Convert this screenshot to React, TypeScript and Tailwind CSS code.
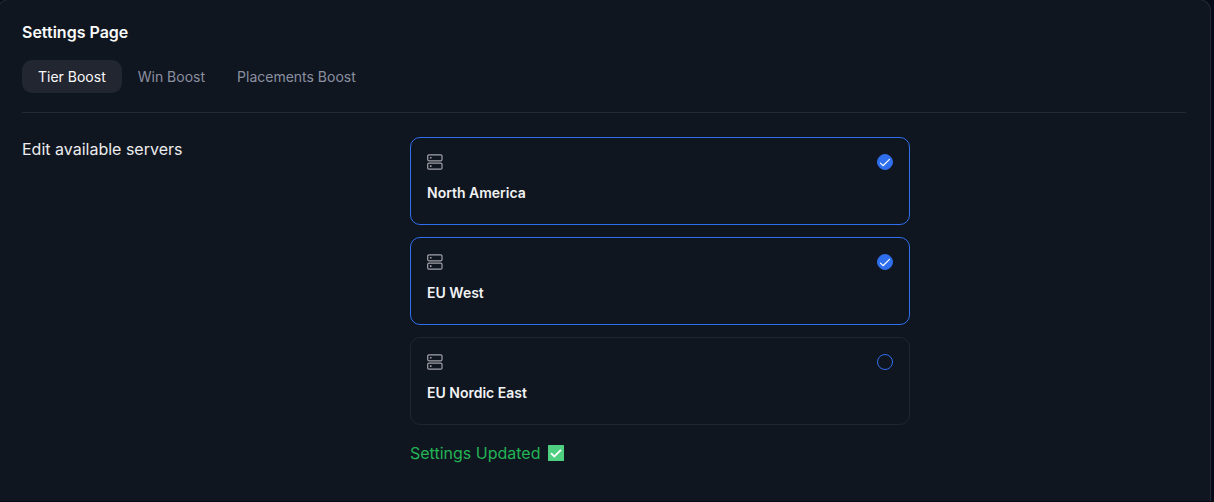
import React, { useState } from 'react';
import clsx from 'clsx';

const tabs = ['Tier Boost', 'Win Boost', 'Placements Boost'];

const servers = [
    { id: 'na', label: 'North America' },
    { id: 'euw', label: 'EU West' },
    { id: 'eune', label: 'EU Nordic East' },
];

const ServerIcon = () => (
    <svg width="16" height="16" viewBox="0 0 16 16" fill="none" stroke="currentColor" strokeWidth="1.2" aria-hidden="true">
        <rect x="0.7" y="0.8" width="14.3" height="6" rx="1.2" />
        <rect x="0.7" y="9.1" width="14.3" height="6" rx="1.2" />
        <path d="M2.9 3.8h1.6M2.9 12.1h1.6" strokeWidth="1.6" />
    </svg>
);

interface ServerCardProps {
    label: string;
    checked: boolean;
    onToggle: () => void;
}

const ServerCard: React.FC<ServerCardProps> = ({ label, checked, onToggle }) => (
    <label
        className={clsx(
            'flex h-22 cursor-pointer justify-between rounded-[10px] border p-4 text-[#a1a1aa]',
            checked ? 'border-[#2f6fed]' : 'border-[#21252f]',
        )}
    >
        <span className="flex flex-col gap-3">
            <ServerIcon />
            <span className="text-sm leading-[22px] font-semibold text-[#f1f2f3]">{label}</span>
        </span>
        <span className="grid h-4 w-4">
            <input
                type="checkbox"
                checked={checked}
                onChange={onToggle}
                className="col-start-1 row-start-1 h-4 w-4 appearance-none rounded-full border border-[#2f6fed] checked:bg-[#2f6fed]"
            />
            {checked && (
                <svg
                    viewBox="0 0 16 16"
                    fill="none"
                    stroke="white"
                    strokeWidth="1.2"
                    strokeLinecap="round"
                    strokeLinejoin="round"
                    className="pointer-events-none col-start-1 row-start-1 h-4 w-4"
                >
                    <path d="M3.5 9.2l2.5 2.5L12.5 5.4" />
                </svg>
            )}
        </span>
    </label>
);

export default function App() {
    const [activeTab, setActiveTab] = useState('Tier Boost');
    const [selected, setSelected] = useState(['na', 'euw']);

    const toggle = (id: string) =>
        setSelected((prev) => (prev.includes(id) ? prev.filter((s) => s !== id) : [...prev, id]));

    return (
        <div className="min-h-screen overflow-hidden bg-[#070b17] pr-[3px] font-['Inter',sans-serif]">
            <main className="-mt-px -ml-[3px] min-h-screen rounded-t-xl border border-b-0 border-[#252a34] bg-[#101620] p-6 pt-5">
                <h1 className="text-base leading-6 font-semibold text-[#fafafa]">Settings Page</h1>

                {/* Tabs */}
                <nav className="mt-4 flex border-b border-[#252a34] pb-[19px]">
                    {tabs.map((tab) => (
                        <button
                            key={tab}
                            type="button"
                            onClick={() => setActiveTab(tab)}
                            className={clsx(
                                'cursor-pointer rounded-[10px] px-4 py-1.5 text-sm leading-[21px]',
                                tab === activeTab ? 'bg-[#222630] text-[#fafafa]' : 'text-[#8b90a0]',
                            )}
                        >
                            {tab}
                        </button>
                    ))}
                </nav>

                {/* Servers */}
                <section className="mt-6 grid grid-cols-3">
                    <h2 className="text-base text-[#ececee]">Edit available servers</h2>
                    <div className="col-span-2">
                        <div className="flex max-w-[500px] flex-col gap-3">
                            {servers.map((server) => (
                                <ServerCard
                                    key={server.id}
                                    label={server.label}
                                    checked={selected.includes(server.id)}
                                    onToggle={() => toggle(server.id)}
                                />
                            ))}
                        </div>
                        <p role="status" className="mt-4 flex items-center gap-2 text-base text-[#22b455]">
                            Settings Updated
                            <svg width="16" height="16" viewBox="0 0 16 16" aria-hidden="true">
                                <rect width="16" height="16" rx="0.5" fill="#4fd080" />
                                <path d="M3 8.2l3.3 3.3L13 4.8" fill="none" stroke="white" strokeWidth="1.8" />
                            </svg>
                        </p>
                    </div>
                </section>
            </main>
        </div>
    );
}
